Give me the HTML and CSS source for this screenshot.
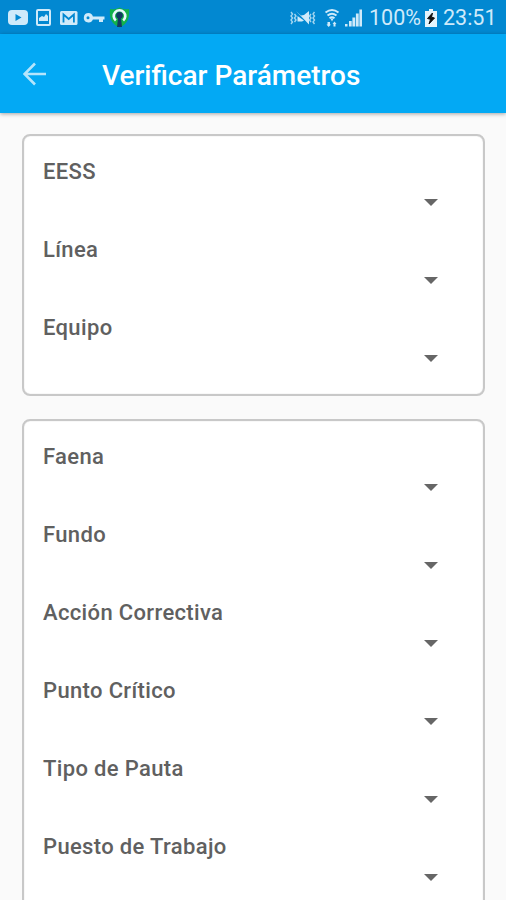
FILE: index.html
```
<!DOCTYPE html>
<html lang="es">
<head>
  <meta charset="UTF-8">
  <meta name="viewport" content="width=device-width, initial-scale=1.0">
  <title>Verificar Parámetros</title>
  <link rel="stylesheet" href="styles.css">
</head>
<body>

  <!-- Status bar -->
  <div class="status">
    <svg class="status_icons" width="130" height="34" viewBox="0 0 130 34">
      <rect x="8" y="10" width="20" height="15" rx="4" fill="#cfeafa"/>
      <path d="M15.500 14v7l6-3.500z" fill="#0288d1"/>
      <rect x="37" y="10" width="13" height="15" rx="1" fill="none" stroke="#cfeafa" stroke-width="2"/>
      <path d="M39 21v-3l3-2 2 1 2-3 2 2v5z" fill="#cfeafa"/>
      <rect x="60" y="11" width="17.500" height="14" rx="1.500" fill="#cfeafa"/>
      <path d="M63.500 22.500v-8l5.200 4.500 5.200-4.500v8" fill="none" stroke="#0288d1" stroke-width="1.800"/>
      <path d="M88.500 13a4.700 4.700 0 1 0 4.400 6.400H99v2.600h4v-2.600h1.500v-3H92.900a4.700 4.700 0 0 0-4.400-3.400zm-.5 3.200a1.500 1.500 0 1 1 0 3 1.500 1.500 0 0 1 0-3z" fill="#cfeafa"/>
      <path d="M119.500 7.500c3 1.800 6 2 9.500 1.500.8 8-1 15-9.500 18.500-8.500-3.500-10.300-10.500-9.500-18.500 3.500.5 6.500.3 9.500-1.500z" fill="#12b24a"/>
      <path d="M115.800 20.500a5.800 5.800 0 1 1 7.400 0" fill="none" stroke="#e8f6fd" stroke-width="2.600"/>
      <path d="M117 27l1-8.500a3.400 3.400 0 1 1 3 0l1 8.500z" fill="#123b63"/>
    </svg>
    <div class="status_right">
      <svg width="76" height="34" viewBox="0 0 76 34">
        <g fill="none" stroke="#a5d6f0" stroke-width="1.400">
          <path d="M2 12l1.500 2L2 16l1.500 2L2 20l1.500 2L2 24M5.500 14L7 16l-1.500 2L7 20l-1.500 2"/>
          <path d="M25.500 12L24 14l1.500 2-1.500 2 1.500 2-1.500 2 1.500 2M22 14l-1.500 2 1.500 2-1.500 2 1.500 2"/>
        </g>
        <path d="M7 11l13 13.500V11l-5 4-3 .500zM8.500 16v5.500h4.500l2-1z" fill="#cfeafa"/>
        <g fill="none" stroke="#cfeafa" stroke-width="1.900">
          <path d="M36.500 12.500q6.500-5 13 0M38.500 15.500q4.500-3.600 9 0M40.500 18.200q2.500-2 5 0"/>
        </g>
        <path d="M41.500 18.500h3L43 21.500zM38.500 22h2.500v2.500h1l-2.300 2.500-2.200-2.500h1zM43.500 24l2-2.500 2 2.500h-1v2.500h-2V24z" fill="#cfeafa"/>
        <path d="M56 24h2.500v2.500H56zM60 21h2.700v5.500H60zM63.400 17.500h2.800v9h-2.800zM66.900 13.500h2.800v13h-2.800zM70.400 9.500H73v17h-2.600z" fill="#cfeafa"/>
      </svg>
      <span class="battery_text">100%</span>
      <svg class="battery" width="12" height="18" viewBox="0 0 12 18">
        <path d="M4 0h4v2h4v16H0V2h4z" fill="#e4f4fc"/>
        <path d="M7.500 4L2.500 9.500l3 .8L4 15l5.500-6-3-.8z" fill="#111" stroke="#111"/>
      </svg>
      <span class="clock">23:51</span>
    </div>
  </div>

  <!-- Toolbar -->
  <div class="toolbar">
    <svg class="back" width="24" height="24" viewBox="0 0 24 24">
      <path d="M23 12H2M12 1.500L1.500 12 12 22.500" fill="none" stroke="#b5e5fc" stroke-width="2.600"/>
    </svg>
    <h1 class="title">Verificar Parámetros</h1>
  </div>

  <div class="content">
    <div class="card">
      <div class="field"><span class="label">EESS</span><span class="arrow"></span></div>
      <div class="field"><span class="label">Línea</span><span class="arrow"></span></div>
      <div class="field"><span class="label">Equipo</span><span class="arrow"></span></div>
    </div>

    <div class="card">
      <div class="field"><span class="label">Faena</span><span class="arrow"></span></div>
      <div class="field"><span class="label">Fundo</span><span class="arrow"></span></div>
      <div class="field"><span class="label">Acción Correctiva</span><span class="arrow"></span></div>
      <div class="field"><span class="label">Punto Crítico</span><span class="arrow"></span></div>
      <div class="field"><span class="label">Tipo de Pauta</span><span class="arrow"></span></div>
      <div class="field"><span class="label">Puesto de Trabajo</span><span class="arrow"></span></div>
    </div>
  </div>

</body>
</html>
```

FILE: styles.css
```
* {
  box-sizing: border-box;
}
body {
  margin: 0;
  height: 900px;
  overflow: hidden;
  display: flex;
  flex-direction: column;
  background-color: #fafafa;
  font-family: Roboto, sans-serif;
}
.status {
  flex: none;
  height: 34px;
  display: flex;
  justify-content: space-between;
  background-color: #0288d1;
  color: #cfeafa;
}
.status_right {
  display: flex;
  align-items: center;
  width: 217px;
  font-size: 21.5px;
  line-height: 34px;
}
.battery_text {
  width: 50px;
  margin-left: 4px;
  padding-top: 2px;
  white-space: nowrap;
}
.battery {
  margin: 1px 6px 0 6px;
}
.clock {
  padding-top: 2px;
}
.toolbar {
  flex: none;
  height: 79px;
  display: flex;
  align-items: center;
  padding-left: 23px;
  background-color: #03a9f4;
  box-shadow: 0 1px 4px rgba(0, 0, 0, 0.35);
}
.title {
  margin: 4px 0 0 55px;
  font-size: 28px;
  font-weight: 500;
  color: #fff;
}
.content {
  flex: none;
  padding: 21px 21px 0 22px;
}
.card {
  margin-bottom: 23px;
  padding: 22px 45px 2px 19px;
  border: 2px solid #c8c8c8;
  border-radius: 8px;
  background-color: #fff;
  box-shadow: inset 0 0 1px #bbb;
}
.field {
  height: 78px;
  display: flex;
  flex-direction: column;
}
.label {
  font-size: 22px;
  font-weight: 500;
  letter-spacing: 0.35px;
  line-height: 28px;
  color: #606060;
}
.arrow {
  align-self: flex-end;
  margin-top: 13px;
  border: 7px solid transparent;
  border-top-color: #666;
  border-bottom: 0;
}
```
